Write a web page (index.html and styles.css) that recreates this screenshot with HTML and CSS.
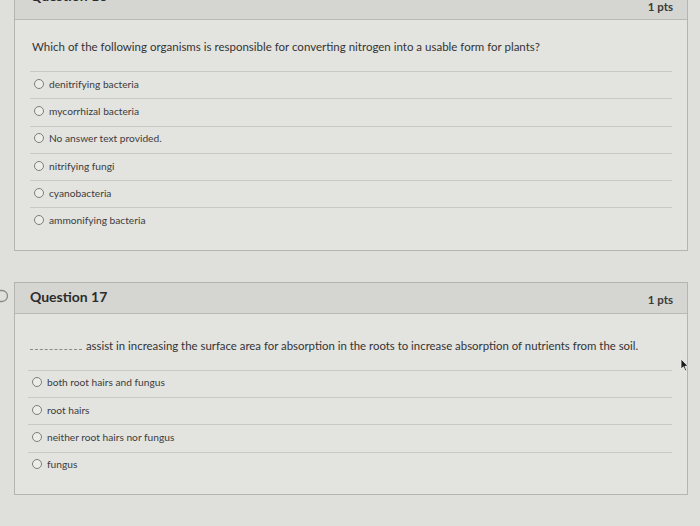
FILE: index.html
```html
<!DOCTYPE html>
<html>
<head>
<meta charset="utf-8">
<link rel="stylesheet" href="styles.css">
</head>
<body>
<div class="page">
  <div class="qrow qrow-first">
    <div class="gutter"></div>
    <div class="card">
      <div class="card-head">
        <span class="title">Question 16</span>
        <span class="pts">1 pts</span>
      </div>
      <div class="card-body">
        <p class="qtext q16">Which of the following organisms is responsible for converting nitrogen into a usable form for plants?</p>
        <ul class="answers a16">
          <li class="answer"><span class="radio"></span><span>denitrifying bacteria</span></li>
          <li class="answer"><span class="radio"></span><span>mycorrhizal bacteria</span></li>
          <li class="answer"><span class="radio"></span><span>No answer text provided.</span></li>
          <li class="answer"><span class="radio"></span><span>nitrifying fungi</span></li>
          <li class="answer"><span class="radio"></span><span>cyanobacteria</span></li>
          <li class="answer"><span class="radio"></span><span>ammonifying bacteria</span></li>
        </ul>
      </div>
    </div>
  </div>

  <div class="qrow qrow-second">
    <div class="gutter">
      <svg class="flag" width="10" height="14" viewBox="0 0 10 14"><path d="M-2 1.5 H2 A5.5 5.5 0 0 1 2 12.5 H-2" fill="none" stroke="#8a8a88" stroke-width="1.3"/></svg>
    </div>
    <div class="card">
      <div class="card-head">
        <span class="title">Question 17</span>
        <span class="pts">1 pts</span>
      </div>
      <div class="card-body">
        <p class="qtext q17"><span class="blank"></span> assist in increasing the surface area for absorption in the roots to increase absorption of nutrients from the soil.</p>
        <ul class="answers a17">
          <li class="answer"><span class="radio"></span><span>both root hairs and fungus</span></li>
          <li class="answer"><span class="radio"></span><span>root hairs</span></li>
          <li class="answer"><span class="radio"></span><span>neither root hairs nor fungus</span></li>
          <li class="answer"><span class="radio"></span><span>fungus</span></li>
        </ul>
      </div>
    </div>
  </div>
</div>
<svg class="cursor" width="9" height="14" viewBox="0 0 9 14"><path d="M1 1 L1 11 L3.4 8.8 L5.2 12.8 L6.6 12.2 L4.9 8.3 L8 8.2 Z" fill="#1a1a1a" stroke="#f2f2f2" stroke-width="0.8"/></svg>
</body>
</html>
```

FILE: styles.css
```css
html, body {
  margin: 0;
  padding: 0;
}
body {
  background: #dfdfdc;
  font-family: Lato, "Open Sans", "Liberation Sans", sans-serif;
  color: #343434;
  width: 700px;
  height: 526px;
  overflow: hidden;
  position: relative;
}
.page {
  display: flex;
  flex-direction: column;
  gap: 31px;
}
.qrow {
  display: flex;
}
.qrow-first {
  margin-top: -12px;
}
.gutter {
  width: 14px;
  flex: none;
  position: relative;
}
.flag {
  position: absolute;
  left: 0;
  top: 7px;
}
.card {
  width: 672px;
  border: 1px solid #b4b4b1;
  background: #e3e3e0;
}
.card-head {
  height: 31px;
  box-sizing: border-box;
  background: #d5d5d2;
  border-bottom: 1px solid #b9b9b6;
  display: flex;
  justify-content: space-between;
  align-items: flex-start;
  padding: 0 14px 0 15px;
}
.title {
  font-weight: 700;
  font-size: 14px;
  line-height: 18px;
  color: #2c2c2c;
  margin-top: 5px;
}
.pts {
  font-size: 11.5px;
  line-height: 14px;
  font-weight: 700;
  color: #3a3a3a;
  margin-top: 10px;
}
.qrow-first .title {
  margin-top: -2px;
}
.qrow-first .pts {
  margin-top: 11px;
}
.card-body {
  padding: 0 15px 15px 15px;
}
.qtext {
  margin: 0;
  font-size: 11.5px;
  line-height: 14px;
}
.q16 {
  padding: 20px 0 0 2px;
}
.q17 {
  padding: 25px 0 0 0;
  font-size: 11.4px;
}
.blank {
  display: inline-block;
  width: 52px;
  border-bottom: 1px dashed #8a8a88;
  margin-right: 1px;
  vertical-align: baseline;
}
.answers {
  list-style: none;
  margin: 17px 0 0 0;
  padding: 0;
}
.a17 {
  margin-top: 17px;
  margin-left: -2px;
}
.answer {
  height: 27.3px;
  box-sizing: border-box;
  border-top: 1px solid #c9c9c6;
  display: flex;
  align-items: center;
  padding: 0 0 3px 4px;
  font-size: 10.2px;
  color: #3c3c3c;
}
.radio {
  width: 8px;
  height: 8px;
  border: 1px solid #7d7d7b;
  border-radius: 50%;
  background: #ecece9;
  margin-right: 5px;
  flex: none;
}
.cursor {
  position: absolute;
  left: 680px;
  top: 358px;
}
```
